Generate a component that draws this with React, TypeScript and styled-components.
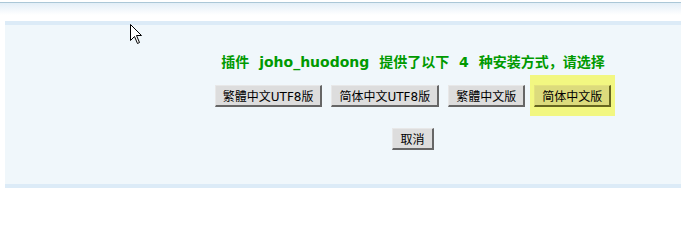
import React from 'react';
import styled, { createGlobalStyle } from 'styled-components';

const GlobalStyle = createGlobalStyle`
  html, body {
    margin: 0;
    padding: 0;
    background: #ffffff;
  }
  body {
    font-family: 'DejaVu Sans', 'Noto Sans CJK SC', sans-serif;
    font-size: 12px;
    overflow: hidden;
  }
`;

const Page = styled.div`
  position: relative;
  width: 681px;
  height: 206px;
  overflow: hidden;
`;

const TopBar = styled.div`
  margin-top: 2px;
  height: 12px;
  border-top: 1px solid #abc7d7;
  background: linear-gradient(#e3eef7, #ffffff);
`;

const Panel = styled.div`
  margin: 6px 0 0 5px;
  border-top: 4px solid #dcebf7;
  border-bottom: 4px solid #dcebf7;
  background: #f0f7fb;
  padding: 27px 0 34px 140px;
  display: flex;
  flex-direction: column;
  align-items: center;
`;

const Title = styled.h3`
  margin: 0;
  font-size: 14px;
  line-height: 20px;
  font-weight: bold;
  color: #009a00;
  word-spacing: 5px;
  white-space: nowrap;
`;

const ButtonRow = styled.div`
  display: flex;
  align-items: center;
  gap: 9px;
  margin-top: 13px;
`;

const Button = styled.button<{ $active?: boolean }>`
  box-sizing: border-box;
  height: 22px;
  padding: 0 7px;
  margin: 0;
  font-family: 'DejaVu Sans', 'Noto Sans CJK SC', sans-serif;
  font-size: 12px;
  color: #000;
  background: ${({ $active }) => ($active ? '#dcdb7c' : '#dddddd')};
  border-style: solid;
  border-width: 1px 2px 2px 1px;
  border-color: ${({ $active }) =>
    $active ? '#e4e27e #66651f #66651f #e4e27e' : '#e8e8e8 #666666 #666666 #e8e8e8'};
  white-space: nowrap;
  cursor: default;
`;

const Highlight = styled.div`
  display: flex;
  padding: 10px 4px 9px;
  margin: -10px -4px -9px;
  background: #f2f781;
`;

const CancelRow = styled.div`
  margin-top: 21px;
`;

const Cursor = styled.svg`
  position: absolute;
  left: 130px;
  top: 24px;
`;

const App = () => (
  <Page>
    <GlobalStyle />
    <TopBar />
    <Panel>
      <Title>插件 joho_huodong 提供了以下 4 种安装方式，请选择</Title>
      <ButtonRow>
        <Button>繁體中文UTF8版</Button>
        <Button>简体中文UTF8版</Button>
        <Button>繁體中文版</Button>
        <Highlight>
          <Button $active>简体中文版</Button>
        </Highlight>
      </ButtonRow>
      <CancelRow>
        <Button>取消</Button>
      </CancelRow>
    </Panel>
    <Cursor width="13" height="21" viewBox="0 0 13 21">
      <path
        d="M0.5 0.5 L0.5 16.5 L4.5 12.5 L7.5 19.5 L9.5 18.5 L6.5 11.5 L11.5 11.5 Z"
        fill="#ffffff"
        stroke="#000000"
        strokeWidth="1"
      />
    </Cursor>
  </Page>
);

export default App;
